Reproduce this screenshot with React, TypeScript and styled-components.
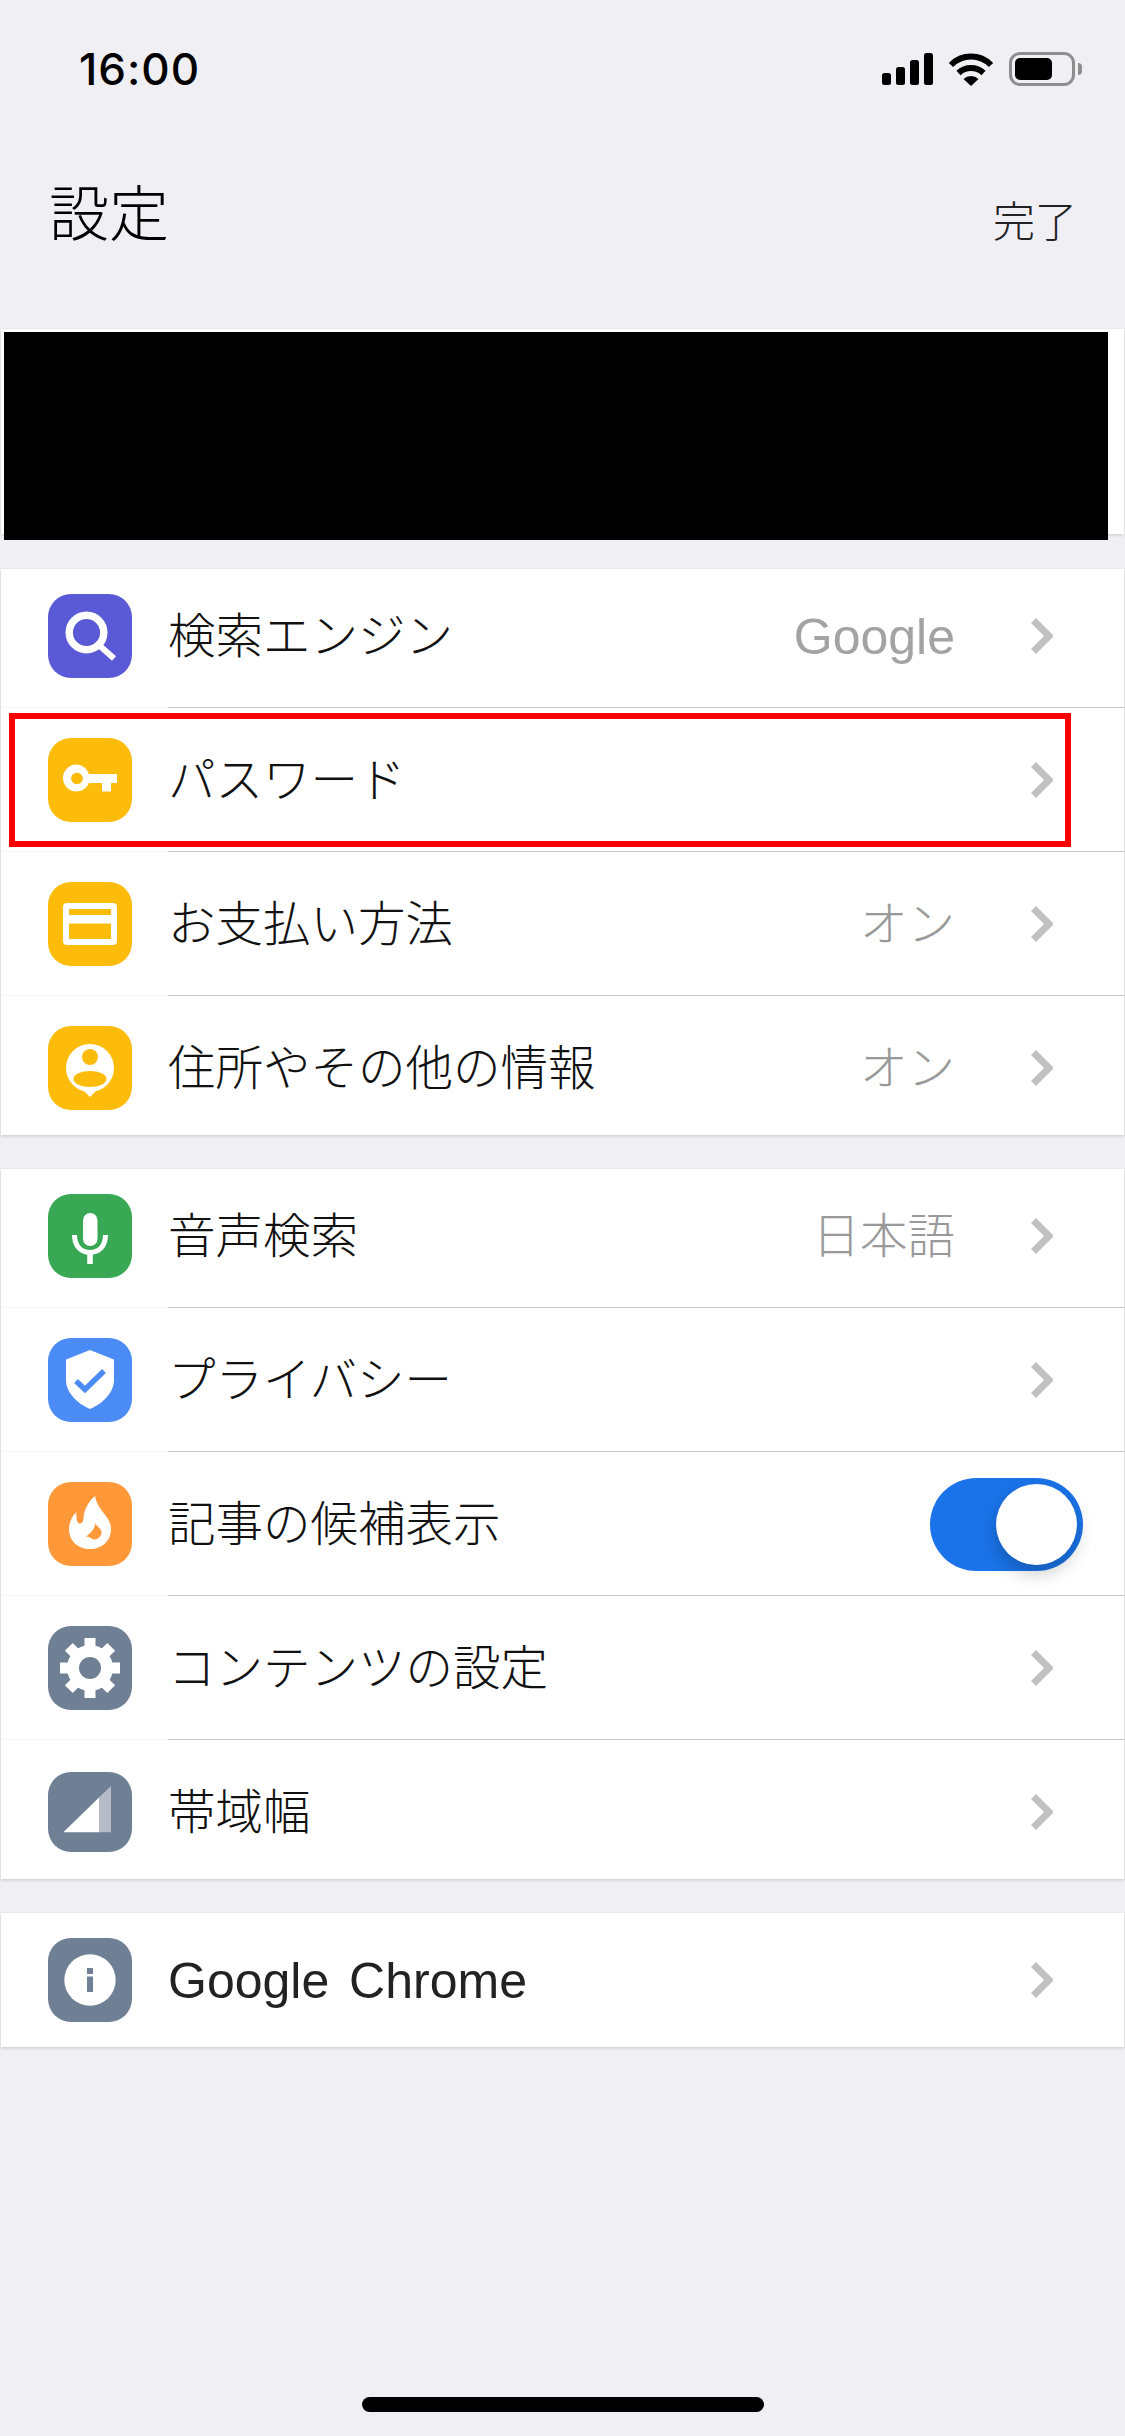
import React from "react";
import styled, { createGlobalStyle } from "styled-components";

const GlobalStyle = createGlobalStyle`
    html, body {
        margin: 0;
        padding: 0;
        background: #efeff4;
    }
    * {
        box-sizing: border-box;
    }
`;

const JP_FONT = `"Liberation Sans", "Noto Sans CJK JP", sans-serif`;

const Page = styled.div`
    width: 1125px;
    height: 2436px;
    overflow: hidden;
    display: flex;
    flex-direction: column;
    background: #efeff4;
    font-family: ${JP_FONT};
`;

const StatusBar = styled.div`
    height: 116px;
    padding: 52px 50px 0 79px;
    display: flex;
    justify-content: space-between;
    align-items: flex-start;
`;
const Time = styled.span`
    font-family: "Inter", sans-serif;
    font-weight: 500;
    font-size: 44px;
    letter-spacing: 1px;
    line-height: 34px;
    color: #000;
`;
const StatusIcons = styled.div`
    display: flex;
    align-items: center;
    gap: 15px;
    height: 34px;
`;
const Battery = styled.div`
    position: relative;
    width: 66px;
    height: 34px;
    padding: 3px;
    border: 3px solid #8e8e8e;
    border-radius: 11px;
    &::after {
        content: "";
        position: absolute;
        left: 66px;
        top: 8px;
        width: 4px;
        height: 12px;
        border-radius: 0 4px 4px 0;
        background: #8e8e8e;
    }
`;
const BatteryLevel = styled.div`
    width: 37px;
    height: 22px;
    border-radius: 5px;
    background: #000;
`;

const Header = styled.header`
    height: 213px;
    padding: 0 48px 0 49px;
    display: flex;
    justify-content: space-between;
`;
const Title = styled.h1`
    margin: 65px 0 0;
    font-size: 60px;
    line-height: 70px;
    font-weight: 300;
    color: #000;
`;
const DoneButton = styled.span`
    margin-top: 82px;
    font-size: 42px;
    line-height: 50px;
    font-weight: 300;
    color: #222;
`;

const Group = styled.section`
    margin: 0 1px 34px;
    background: #fff;
    box-shadow: 0 1px 3px rgba(0, 0, 0, 0.17);
`;
const AccountGroup = styled(Group)`
    height: 205px;
    margin-bottom: 35px;
`;
const Redacted = styled.div`
    width: 1104px;
    height: 208px;
    margin: 0 0 0 3px;
    position: relative;
    top: 3px;
    background: #000;
`;

const Row = styled.div<{ $first?: boolean; $last?: boolean }>`
    position: relative;
    display: flex;
    align-items: center;
    padding: ${(p) => (p.$first ? 25 : 30)}px 71px ${(p) => (p.$last ? 25 : 30)}px 47px;
    background: ${(p) =>
        p.$last
            ? "none"
            : "linear-gradient(#c8c7cc, #c8c7cc) no-repeat 167px 100% / 100% 1px, linear-gradient(#f6f6f6, #f6f6f6) no-repeat 0 100% / 100% 1px"};
`;
const IconTile = styled.div<{ $color: string; $short?: boolean }>`
    flex: none;
    width: 84px;
    height: ${(p) => (p.$short ? 80 : 84)}px;
    margin: ${(p) => (p.$short ? "2px" : "0")} 0;
    border-radius: 23px;
    background: ${(p) => p.$color};
    svg {
        display: block;
    }
`;
const Label = styled.span`
    margin-left: 36px;
    padding-top: 2px;
    flex: 1;
    font-size: 47.5px;
    line-height: 60px;
    font-weight: 300;
    color: #111;
    white-space: nowrap;
`;
const LatinLabel = styled(Label)`
    font-size: 50px;
    font-weight: 400;
    word-spacing: 6px;
    color: #222;
`;
const Value = styled.span`
    margin-right: 76px;
    padding-top: 2px;
    font-size: 47.5px;
    line-height: 60px;
    font-weight: 300;
    color: #999;
    white-space: nowrap;
`;
const LatinValue = styled(Value)`
    font-size: 50px;
    font-weight: 400;
    color: #a3a3a3;
`;
const Chevron = styled.svg`
    flex: none;
    display: block;
    width: 22px;
    height: 36px;
`;
const Toggle = styled.div`
    flex: none;
    width: 153px;
    height: 93px;
    margin: -5px -30px -5px 0;
    padding: 6px;
    display: flex;
    justify-content: flex-end;
    border-radius: 47px;
    background: #1a73e8;
`;
const ToggleKnob = styled.div`
    width: 81px;
    height: 81px;
    border-radius: 50%;
    background: #fff;
    box-shadow: 0 8px 18px rgba(0, 0, 0, 0.22);
`;
const Highlight = styled.div`
    position: absolute;
    left: 8px;
    top: 5px;
    width: 1062px;
    height: 134px;
    border: 6px solid #ff0000;
`;
const HomeIndicator = styled.div`
    width: 402px;
    height: 15px;
    margin: auto auto 24px;
    border-radius: 8px;
    background: #000;
`;

const Glyph = ({ children, h = 84 }: { children: React.ReactNode; h?: number }) => (
    <svg width="84" height={h} viewBox={`0 0 84 ${h}`}>
        {children}
    </svg>
);

const GRAY = "#6f7f94";

const SearchIcon = () => (
    <Glyph>
        <circle cx="38.5" cy="38.5" r="17.3" fill="none" stroke="#fff" strokeWidth="7.4" />
        <path d="M52 52 L66 64.5" fill="none" stroke="#fff" strokeWidth="6" />
    </Glyph>
);
const KeyIcon = () => (
    <Glyph>
        <path
            fillRule="evenodd"
            fill="#fff"
            d="M28.5 26.5 C34 26.5 38.5 30 41 36 H69 V45 H63 V53.5 H54 V45 H41 C38.5 50.5 34 53.5 28.5 53.5 C21 53.5 15 47.5 15 40 C15 32.5 21 26.5 28.5 26.5 Z M29 34.8 C25.8 34.8 23.2 37.3 23.2 40.4 C23.2 43.5 25.8 46 29 46 C32.2 46 34.8 43.5 34.8 40.4 C34.8 37.3 32.2 34.8 29 34.8 Z"
        />
    </Glyph>
);
const CardIcon = () => (
    <Glyph>
        <rect x="15" y="21" width="54" height="42" rx="4" fill="#fff" />
        <rect x="21" y="27" width="42" height="6" fill="#fdbb0a" />
        <rect x="21" y="41.5" width="42" height="15.5" fill="#fdbb0a" />
    </Glyph>
);
const AddressIcon = () => (
    <Glyph>
        <circle cx="42" cy="42" r="24" fill="#fff" />
        <path d="M33 62 L42 71 L51 62 Z" fill="#fff" />
        <circle cx="42" cy="31" r="8" fill="#fdbb0a" />
        <ellipse cx="42" cy="53" rx="16.5" ry="8" fill="#fdbb0a" />
    </Glyph>
);
const MicIcon = () => (
    <Glyph>
        <rect x="35" y="19" width="14.5" height="33" rx="7.25" fill="#fff" />
        <path d="M26.5 41 C26.5 52 33 58.5 42 58.5 C51 58.5 57.5 52 57.5 41" fill="none" stroke="#fff" strokeWidth="5" />
        <rect x="39.2" y="58" width="5.6" height="12" fill="#fff" />
    </Glyph>
);
const ShieldIcon = () => (
    <Glyph>
        <path d="M42 12 L66 21.5 V42 C66 55 54 66 42 71 C30 66 18 55 18 42 V21.5 Z" fill="#fff" />
        <path d="M28 43 L37 51.5 L56 33" fill="none" stroke="#4b8bf5" strokeWidth="5.5" />
    </Glyph>
);
const FlameIcon = () => (
    <Glyph>
        <path
            fill="#fff"
            d="M47 14 C41 19 36 27 35.5 36 C35.2 40 33.5 42 31.5 41.5 C29 41 28 36 28.5 30 C24 34 21 41 21 47 C21 59 30 67 42 67 C54 67 63 59 63 47 C63 34 50 30 47 14 Z"
        />
        <path
            fill="#ff9838"
            d="M47 41 C47.5 46 43 51 38 54.5 C41 54.5 43 56 45.5 57.5 C50.5 57.5 54 53.5 53.5 49.5 C53 46 49 45 47 41 Z"
        />
    </Glyph>
);
const GearIcon = () => (
    <Glyph>
        <circle cx="42" cy="42" r="23" fill="#fff" />
        {[0, 45, 90, 135, 180, 225, 270, 315].map((deg) => (
            <rect key={deg} x="36.5" y="12" width="11" height="14" fill="#fff" transform={`rotate(${deg} 42 42)`} />
        ))}
        <circle cx="42" cy="42" r="11" fill={GRAY} />
    </Glyph>
);
const BandwidthIcon = () => (
    <Glyph h={80}>
        <path d="M15.3 60.3 L51 25.6 V60.3 Z" fill="#fff" />
        <path d="M51 25.6 L63 14 V60.3 H51 Z" fill="#b5bcc8" />
    </Glyph>
);
const InfoIcon = () => (
    <Glyph>
        <circle cx="42" cy="42" r="25.7" fill="#fff" />
        <rect x="39" y="30" width="6" height="6" fill={GRAY} />
        <rect x="39" y="38.5" width="6" height="15.5" fill={GRAY} />
    </Glyph>
);

const ChevronIcon = () => (
    <Chevron viewBox="0 0 22 36">
        <path d="M2.5 2.5 L18 18 L2.5 33.5" fill="none" stroke="#c0c0c0" strokeWidth="7" />
    </Chevron>
);

function App() {
    return (
        <Page>
            <GlobalStyle />
            <StatusBar>
                <Time>16:00</Time>
                <StatusIcons>
                    <svg width="51" height="32" viewBox="0 0 51 32">
                        <rect x="0" y="20" width="9" height="12" rx="2.5" />
                        <rect x="14" y="14" width="9" height="18" rx="2.5" />
                        <rect x="28" y="7" width="9" height="25" rx="2.5" />
                        <rect x="42" y="0" width="9" height="32" rx="2.5" />
                    </svg>
                    <svg width="46" height="33" viewBox="0 0 46 33">
                        <path d="M3 12 A 28 28 0 0 1 43 12" fill="none" stroke="#000" strokeWidth="6" />
                        <path d="M10.5 20 A 18 18 0 0 1 35.5 20" fill="none" stroke="#000" strokeWidth="6" />
                        <path d="M15.5 26 A 11 11 0 0 1 30.5 26 L23 33 Z" />
                    </svg>
                    <Battery>
                        <BatteryLevel />
                    </Battery>
                </StatusIcons>
            </StatusBar>
            <Header>
                <Title>設定</Title>
                <DoneButton>完了</DoneButton>
            </Header>

            <AccountGroup>
                <Redacted />
            </AccountGroup>

            <Group>
                <Row $first>
                    <IconTile $color="#5a5ad6"><SearchIcon /></IconTile>
                    <Label>検索エンジン</Label>
                    <LatinValue>Google</LatinValue>
                    <ChevronIcon />
                </Row>
                <Row>
                    <IconTile $color="#fdbb0a"><KeyIcon /></IconTile>
                    <Label>パスワード</Label>
                    <ChevronIcon />
                    <Highlight />
                </Row>
                <Row>
                    <IconTile $color="#fdbb0a"><CardIcon /></IconTile>
                    <Label>お支払い方法</Label>
                    <Value>オン</Value>
                    <ChevronIcon />
                </Row>
                <Row $last>
                    <IconTile $color="#fdbb0a"><AddressIcon /></IconTile>
                    <Label>住所やその他の情報</Label>
                    <Value>オン</Value>
                    <ChevronIcon />
                </Row>
            </Group>

            <Group>
                <Row $first>
                    <IconTile $color="#38a854"><MicIcon /></IconTile>
                    <Label>音声検索</Label>
                    <Value>日本語</Value>
                    <ChevronIcon />
                </Row>
                <Row>
                    <IconTile $color="#4b8bf5"><ShieldIcon /></IconTile>
                    <Label>プライバシー</Label>
                    <ChevronIcon />
                </Row>
                <Row>
                    <IconTile $color="#ff9838"><FlameIcon /></IconTile>
                    <Label>記事の候補表示</Label>
                    <Toggle>
                        <ToggleKnob />
                    </Toggle>
                </Row>
                <Row>
                    <IconTile $color={GRAY}><GearIcon /></IconTile>
                    <Label>コンテンツの設定</Label>
                    <ChevronIcon />
                </Row>
                <Row $last>
                    <IconTile $color={GRAY} $short><BandwidthIcon /></IconTile>
                    <Label>帯域幅</Label>
                    <ChevronIcon />
                </Row>
            </Group>

            <Group>
                <Row $first $last>
                    <IconTile $color={GRAY}><InfoIcon /></IconTile>
                    <LatinLabel>Google Chrome</LatinLabel>
                    <ChevronIcon />
                </Row>
            </Group>

            <HomeIndicator />
        </Page>
    );
}

export default App;
